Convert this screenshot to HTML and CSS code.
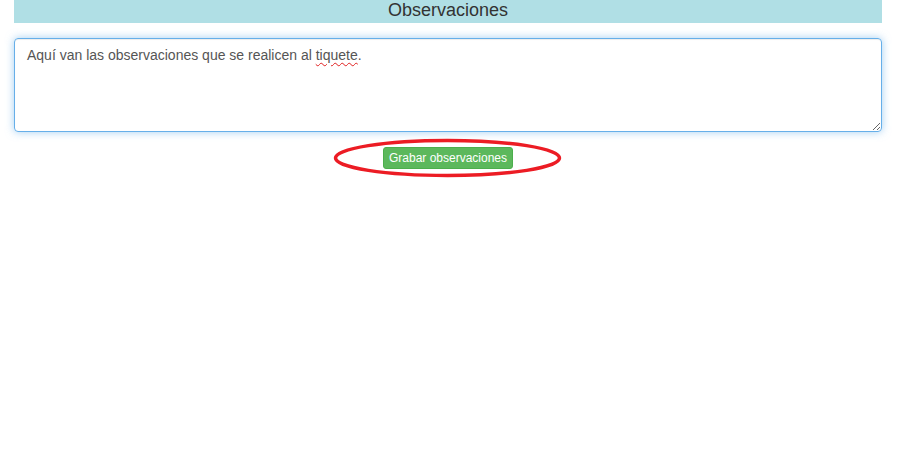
FILE: index.html
```html
<!DOCTYPE html>
<html lang="es">
<head>
<meta charset="utf-8">
<title>Observaciones</title>
<link rel="stylesheet" href="styles.css">
</head>
<body>
<div class="container">
  <div class="panel-title">Observaciones</div>
  <div class="obs-box">Aquí van las observaciones que se realicen al <span class="misspelled">tiquete</span>.</div>
  <div class="actions">
    <span class="btn-wrap">
      <button class="btn-success">Grabar observaciones</button>
      <svg class="highlight" width="230" height="41" viewBox="0 0 230 41" aria-hidden="true">
        <ellipse cx="114.5" cy="20" rx="112" ry="17.5" fill="none" stroke="#ec1c24" stroke-width="3.5"/>
      </svg>
    </span>
  </div>
</div>
</body>
</html>
```

FILE: styles.css
```css
html, body {
  margin: 0;
  padding: 0;
  background: #fff;
  font-family: "Liberation Sans", Arial, sans-serif;
  color: #333;
}

body {
  min-height: 460px;
}

.container {
  padding: 0 17px 40px 14px;
}

.panel-title {
  background: #b0dfe5;
  height: 23px;
  line-height: 21px;
  font-size: 18px;
  text-align: center;
  color: #333;
}

.obs-box {
  margin-top: 15px;
  height: 80px;
  box-sizing: content-box;
  padding: 6px 12px;
  border: 1px solid #66afe9;
  border-radius: 4px;
  box-shadow: inset 0 1px 1px rgba(0,0,0,.075), 0 0 8px rgba(102,175,233,.6);
  font-size: 14px;
  line-height: 20px;
  color: #555;
  resize: vertical;
  overflow: auto;
}

.misspelled {
  text-decoration: underline wavy #e02020;
  text-decoration-thickness: 1px;
  text-underline-offset: 2px;
}

.actions {
  margin-top: 15px;
  display: flex;
  justify-content: center;
}

.btn-wrap {
  position: relative;
  display: inline-block;
}

.btn-success {
  display: block;
  font-family: "Liberation Sans", Arial, sans-serif;
  font-size: 12px;
  line-height: 18px;
  padding: 1px 5px;
  color: #fff;
  background: #5cb85c;
  border: 1px solid #4cae4c;
  border-radius: 3px;
  cursor: pointer;
}

.highlight {
  position: absolute;
  left: -50px;
  top: -9px;
  width: 230px;
  height: 41px;
  overflow: visible;
  pointer-events: none;
}
```
